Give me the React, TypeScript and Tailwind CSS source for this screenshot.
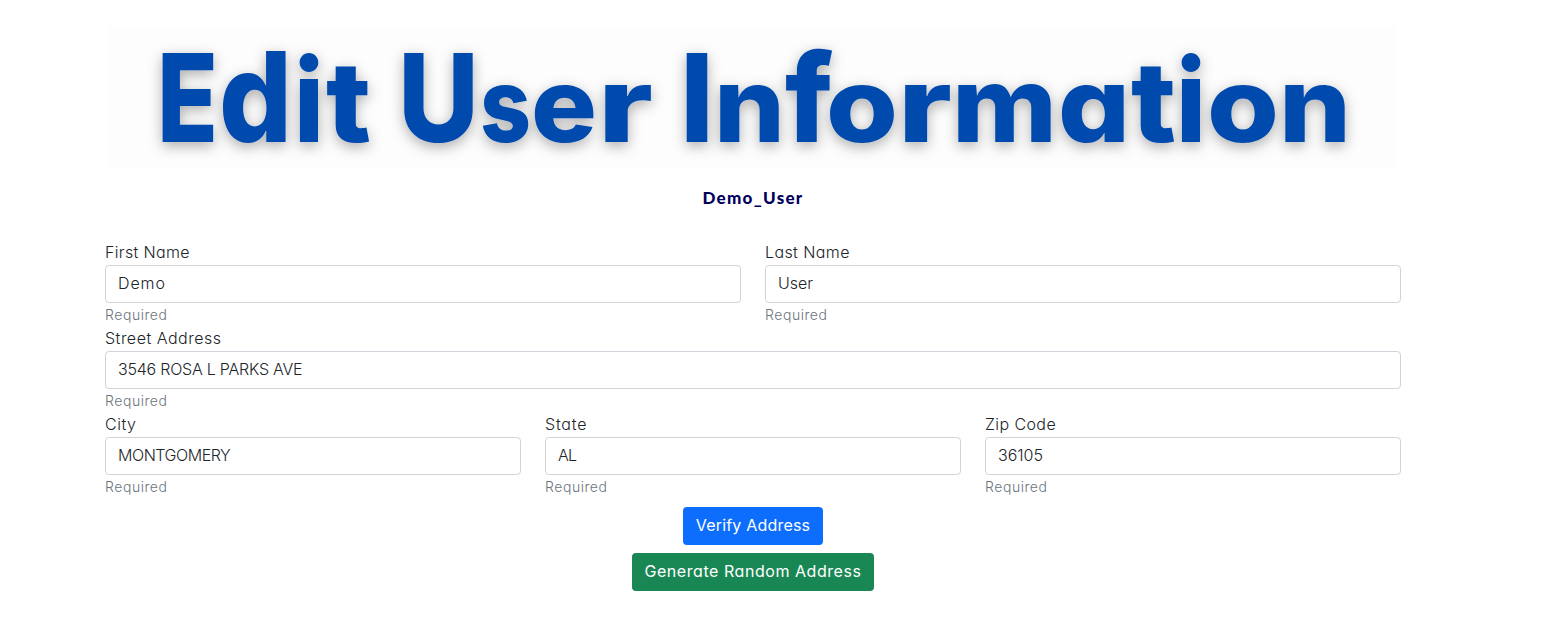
type FieldProps = { id: string; label: string; value: string; labelTracking: string; valueTracking: string };

function Field({ id, label, value, labelTracking, valueTracking }: FieldProps) {
  return (
    <div className="min-w-0 flex-1">
      <label htmlFor={id} className="block h-6 text-base leading-[23px] font-light whitespace-nowrap text-[#212529]">
        <span className={labelTracking}>{label}</span>
      </label>
      <input
        id={id}
        defaultValue={value}
        className={`block h-[38px] w-full rounded border border-[#ced4da] bg-white px-3 pb-1 pt-0.5 text-base font-light text-[#212529] outline-none ${valueTracking}`}
      />
      <div className="h-6 pt-px text-sm leading-[22px] font-light text-[#6c757d]">
        <span className="tracking-[0.55px]">Required</span>
      </div>
    </div>
  );
}

// [character, left edge, advance width, font size]
type Glyph = [string, number, number, number];

const words: Glyph[][] = [
  [["E", 157, 61, 123], ["d", 219, 73, 125], ["i", 294, 30, 115], ["t", 326, 45, 112]],
  [["U", 398, 81, 123], ["s", 480, 51, 104], ["e", 531, 66, 104], ["r", 598, 55, 104]],
  [
    ["I", 680, 34, 123], ["n", 714, 71, 104], ["f", 785, 48, 122], ["o", 826, 72, 104], ["r", 898, 54, 104],
    ["m", 952, 105, 104], ["a", 1058, 72, 104], ["t", 1131, 45, 112], ["i", 1176, 30, 115], ["o", 1207, 72, 104], ["n", 1279, 72, 104],
  ],
];

function Banner() {
  return (
    <h1 className="ml-[3px] h-[142px] w-[1288px] bg-[#fdfdfd]">
      <svg width="1288" height="142" viewBox="108 27 1288 142" className="block overflow-visible font-['Inter'] font-extrabold [font-feature-settings:'cv11']">
        <defs>
          <filter id="shadow" x="-5%" y="-20%" width="110%" height="140%">
            <feDropShadow dx="0" dy="4" stdDeviation="7" floodColor="#000" floodOpacity="0.32" />
          </filter>
        </defs>
        <g filter="url(#shadow)" fill="#004aad">
          {words.map((word, w) => (
            <g key={w}>
              {word.map(([char, x, width, size]) => (
                <text key={x} x={x} y="141.6" fontSize={size} textLength={width} lengthAdjust="spacingAndGlyphs">
                  {char}
                </text>
              ))}
            </g>
          ))}
        </g>
      </svg>
    </h1>
  );
}

export default function App() {
  return (
    <main className="h-[621px] w-full overflow-hidden bg-white pt-[27px] pl-[105px] font-['Inter','Liberation_Sans',sans-serif] [font-feature-settings:'cv11']">
      <div className="w-[1296px]">
        <Banner />
        <h2 className="mb-9 flex h-10 items-center justify-center pt-[18px] text-[17px] font-black text-[#00005c]">
          <span className="font-['Lato'] tracking-[1.3px]">Demo_User</span>
        </h2>
        <form>
          <div className="-mt-1 flex gap-6">
            <Field id="first" label="First Name" value="Demo" labelTracking="tracking-[0.35px]" valueTracking="tracking-[0.9px]" />
            <Field id="last" label="Last Name" value="User" labelTracking="tracking-[0.4px]" valueTracking="tracking-[0px]" />
          </div>
          <div className="flex">
            <Field id="street" label="Street Address" value="3546 ROSA L PARKS AVE" labelTracking="tracking-[0.5px]" valueTracking="tracking-[-0.23px]" />
          </div>
          <div className="flex gap-6">
            <Field id="city" label="City" value="MONTGOMERY" labelTracking="tracking-[0.5px]" valueTracking="tracking-[-0.45px]" />
            <Field id="state" label="State" value="AL" labelTracking="tracking-[0.8px]" valueTracking="tracking-[-0.8px]" />
            <Field id="zip" label="Zip Code" value="36105" labelTracking="tracking-[0.4px]" valueTracking="tracking-[0px]" />
          </div>
          <div className="mt-2 flex flex-col items-center gap-2">
            <button type="button" className="h-[38px] w-[140px] rounded bg-[#0d6efd] pb-[3px] text-base whitespace-nowrap text-white">
              <span className="tracking-[0.2px]">Verify Address</span>
            </button>
            <button type="button" className="h-[38px] w-[242px] rounded bg-[#198754] pb-[3px] text-base whitespace-nowrap text-white">
              <span className="tracking-[0.55px]">Generate Random Address</span>
            </button>
          </div>
        </form>
      </div>
    </main>
  );
}
